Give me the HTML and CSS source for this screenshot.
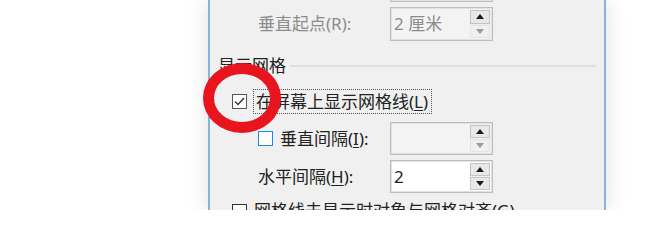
FILE: index.html
```html
<!DOCTYPE html>
<html lang="zh-CN">
<head>
<meta charset="utf-8">
<title>显示网格</title>
<link rel="stylesheet" href="styles.css">
</head>
<body>
<div class="page">
  <div class="dialog">
    <div class="row row-first">
      <span class="label"></span>
      <div class="spin disabled"><span class="field"></span><span class="btns"><span class="btn up"></span><span class="btn down dim"></span></span></div>
    </div>
    <div class="row row-second">
      <span class="label disabled-text">垂直起点(R):</span>
      <div class="spin disabled"><span class="field">2 厘米</span><span class="btns"><span class="btn up"></span><span class="btn down dim"></span></span></div>
    </div>
    <div class="group-head">
      <span class="group-title">显示网格</span>
      <span class="rule"></span>
    </div>
    <div class="check-row main-check">
      <span class="box checked"><svg width="11" height="9" viewBox="0 0 11 9"><path d="M1 4.5 L4 7.5 L10 1" fill="none" stroke="#333" stroke-width="1.4"/></svg></span>
      <span class="focus">在屏幕上显示网格线(<u>L</u>)</span>
    </div>
    <div class="row row-sub">
      <span class="label sub-label"><span class="box blue"></span>垂直间隔(<u>I</u>):</span>
      <div class="spin disabled"><span class="field"></span><span class="btns"><span class="btn up"></span><span class="btn down dim"></span></span></div>
    </div>
    <div class="row row-h">
      <span class="label">水平间隔(<u>H</u>):</span>
      <div class="spin enabled"><span class="field">2</span><span class="btns"><span class="btn up"></span><span class="btn down"></span></span></div>
    </div>
    <div class="check-row last-check">
      <span class="box"></span>
      <span class="check-text">网格线未显示时对象与网格对齐(G)</span>
    </div>
  </div>
  <div class="circle"></div>
</div>
</body>
</html>
```
FILE: styles.css
```css
html, body {
  margin: 0;
  padding: 0;
  background: #ffffff;
}
body {
  width: 663px;
  height: 210px;
  overflow: hidden;
  font-family: "Noto Sans", "Noto Sans CJK SC", sans-serif;
  font-size: 17px;
  line-height: 20px;
  color: #222222;
}
.page {
  position: relative;
  width: 663px;
  height: 210px;
  overflow: hidden;
}
.dialog {
  margin-left: 208px;
  width: 394px;
  height: 210px;
  background: #f0f0f0;
  border-left: 2px solid #86b2de;
  border-right: 2px solid #86b2de;
  box-shadow: 0 0 20px rgba(0, 0, 0, 0.13);
  display: flex;
  flex-direction: column;
  overflow: hidden;
}
.row {
  display: flex;
  align-items: center;
  padding-left: 48px;
}
.label {
  width: 132px;
  flex: none;
  display: flex;
  align-items: center;
  white-space: nowrap;
}
.disabled-text { color: #8c8c8c; }
.row-first { margin-top: -32px; }
.row-second { margin-top: 5px; }
.row-sub { margin-top: 8px; }
.row-h { margin-top: 5px; }

.spin {
  width: 103px;
  height: 34px;
  box-sizing: border-box;
  border: 1px solid #bdbdbd;
  box-shadow: inset 0 0 0 1px #e2e2e2;
  display: flex;
  align-items: stretch;
  padding: 2px;
}
.row-sub .spin, .row-h .spin { height: 33px; }
.spin.disabled { background: #f3f3f3; }
.spin.enabled { background: #ffffff; }
.field {
  flex: 1;
  display: flex;
  align-items: center;
  padding-left: 1px;
  white-space: nowrap;
}
.disabled .field { color: #8c8c8c; }
.btns {
  width: 20px;
  display: flex;
  flex-direction: column;
  gap: 1px;
  background: #f0f0f0;
}
.btn {
  flex: 1;
  box-sizing: border-box;
  border: 1px solid #c4c4c4;
  background: #e8e8e8;
  display: flex;
  align-items: center;
  justify-content: center;
}
.btn.up::after {
  content: "";
  border-left: 4px solid transparent;
  border-right: 4px solid transparent;
  border-bottom: 5px solid #1a1a1a;
}
.btn.down::after {
  content: "";
  border-left: 4px solid transparent;
  border-right: 4px solid transparent;
  border-top: 5px solid #1a1a1a;
}
.btn.dim { background: #f0f0f0; border-color: #e4e4e4; }
.btn.dim::after { border-top-color: #9a9a9a; }

.group-head {
  margin-top: 15px;
  height: 20px;
  display: flex;
  align-items: center;
  padding-left: 8px;
  padding-right: 8px;
  gap: 4px;
}
.group-title { white-space: nowrap; }
.rule {
  flex: 1;
  height: 2px;
  background: #e0e0e0;
}

.check-row {
  display: flex;
  align-items: center;
  padding-left: 22px;
}
.main-check { margin-top: 13px; }
.last-check { margin-top: 8px; }
.box {
  width: 15px;
  height: 15px;
  box-sizing: border-box;
  border: 1px solid #333333;
  background: #ffffff;
  flex: none;
  display: inline-flex;
  align-items: center;
  justify-content: center;
}
.box.checked { border-color: #555555; }
.box.blue { border-color: #1e88e5; margin-right: 7px; }
.focus {
  margin-left: 6px;
  height: 25px;
  box-sizing: border-box;
  border: 1px dotted #555555;
  padding: 0 3px 0 2px;
  display: flex;
  align-items: center;
  white-space: nowrap;
}
.check-text {
  margin-left: 7px;
  white-space: nowrap;
}
u { text-decoration-thickness: 1px; text-underline-offset: 2px; }

.circle {
  position: absolute;
  left: 203px;
  top: 63px;
  width: 78px;
  height: 70px;
  box-sizing: border-box;
  border: 11px solid #e8141e;
  border-radius: 50%;
}
```
